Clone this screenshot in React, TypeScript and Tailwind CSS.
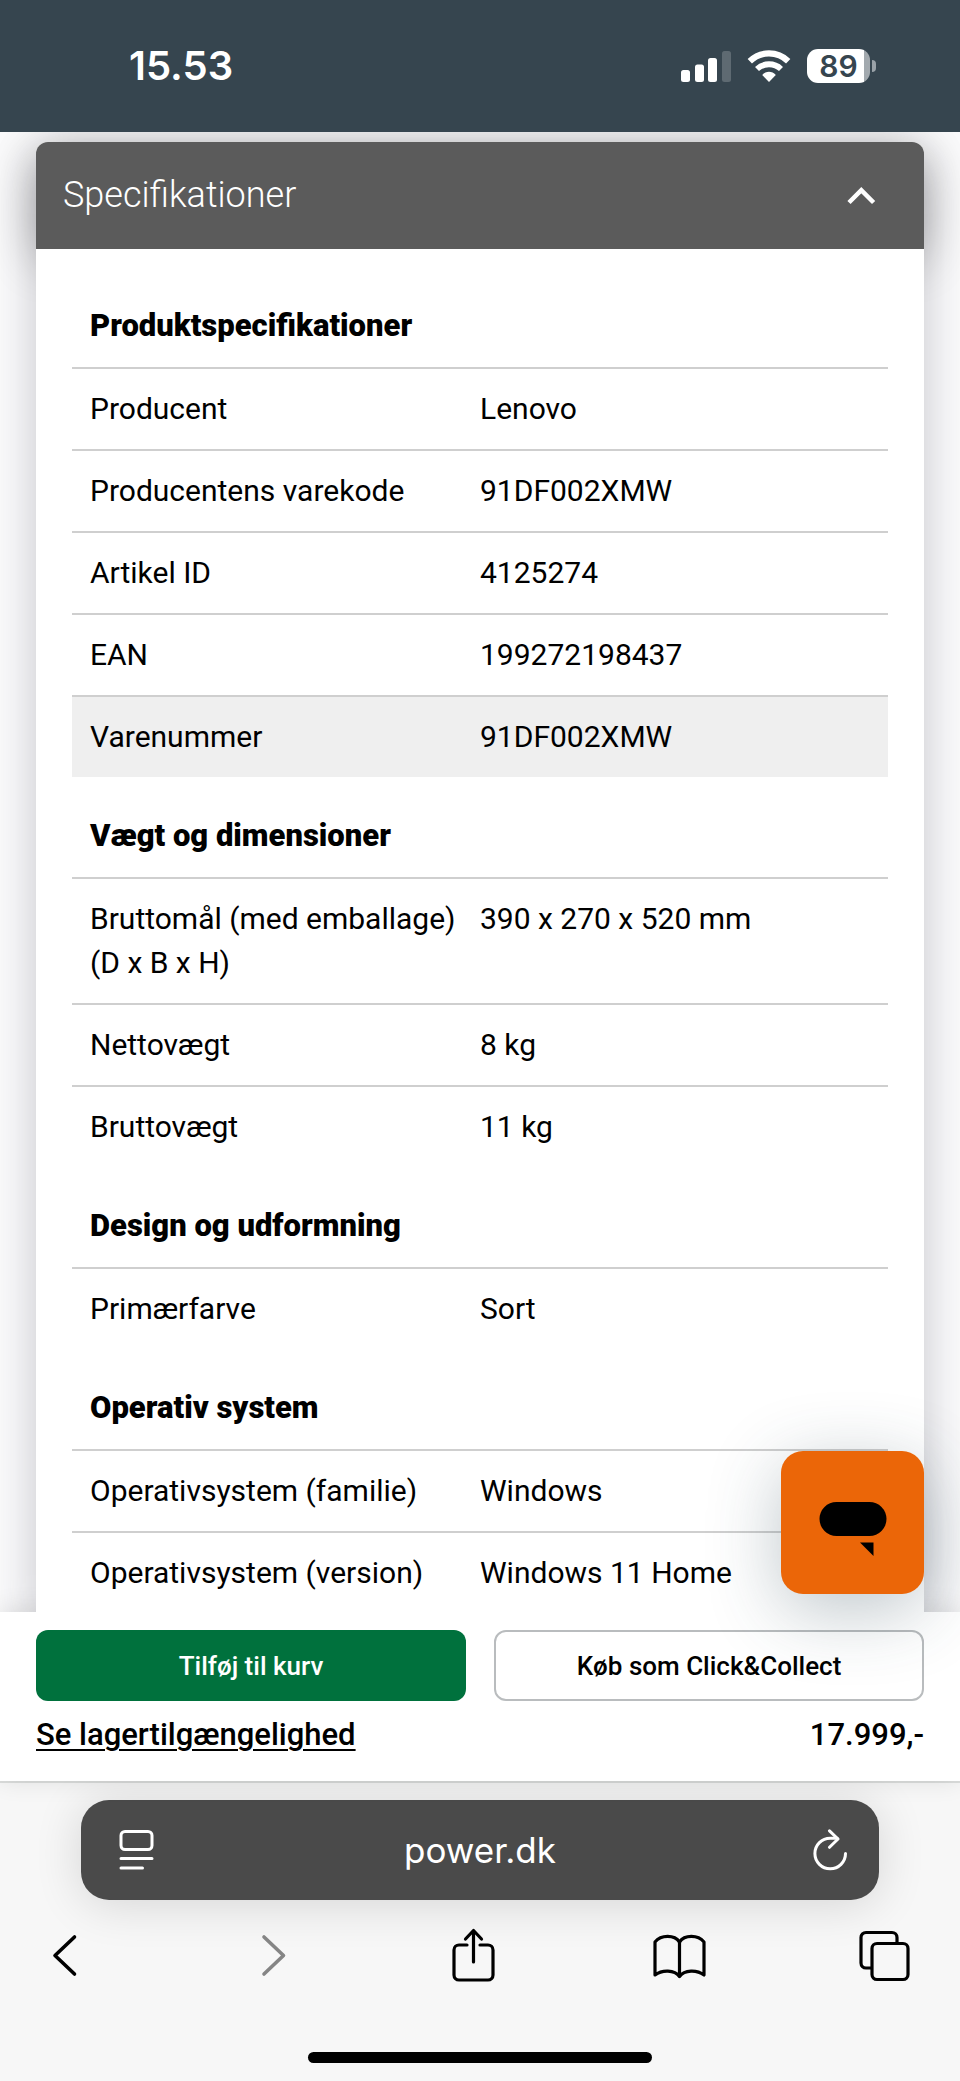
import React, { useState } from "react";

type Spec = { navn: string; vaerdi: string; markeret?: boolean };
type SpecGruppe = { titel: string; specs: Spec[] };

const grupper: SpecGruppe[] = [
  {
    titel: "Produktspecifikationer",
    specs: [
      { navn: "Producent", vaerdi: "Lenovo" },
      { navn: "Producentens varekode", vaerdi: "91DF002XMW" },
      { navn: "Artikel ID", vaerdi: "4125274" },
      { navn: "EAN", vaerdi: "199272198437" },
      { navn: "Varenummer", vaerdi: "91DF002XMW", markeret: true },
    ],
  },
  {
    titel: "Vægt og dimensioner",
    specs: [
      { navn: "Bruttomål (med emballage) (D x B x H)", vaerdi: "390 x 270 x 520 mm" },
      { navn: "Nettovægt", vaerdi: "8 kg" },
      { navn: "Bruttovægt", vaerdi: "11 kg" },
    ],
  },
  {
    titel: "Design og udformning",
    specs: [{ navn: "Primærfarve", vaerdi: "Sort" }],
  },
  {
    titel: "Operativ system",
    specs: [
      { navn: "Operativsystem (familie)", vaerdi: "Windows" },
      { navn: "Operativsystem (version)", vaerdi: "Windows 11 Home" },
    ],
  },
];

const StatusBar = () => (
  <header className="flex h-[132px] shrink-0 items-center justify-between bg-[#36454f] pr-[84px] pl-[129px] font-['Inter',sans-serif] text-white">
    <span className="text-[40px] leading-[40px] font-semibold">15.53</span>
    <div className="flex items-center gap-4">
      <svg width="50" height="34" viewBox="0 0 50 34" fill="currentColor" aria-label="Signal">
        <rect x="0" y="21" width="9" height="12" rx="2.5" />
        <rect x="14" y="15.5" width="9" height="17.5" rx="2.5" />
        <rect x="27" y="9" width="9" height="24" rx="2.5" />
        <rect x="41" y="2" width="9" height="31" rx="2.5" opacity="0.2" />
      </svg>
      <svg width="44" height="34" viewBox="0 0 44 34" fill="none" aria-label="Wi-Fi">
        <path d="M2.800 12.200a27.500 27.500 0 0 1 38.400 0" stroke="currentColor" strokeWidth="6.2" />
        <path d="M10 20a17.500 17.500 0 0 1 24 0" stroke="currentColor" strokeWidth="5.8" />
        <path d="M22 33l-6.800-7c3.800-4.200 9.800-4.200 13.600 0z" fill="currentColor" />
      </svg>
      <div className="flex items-center gap-0.5">
        <div className="flex h-[34px] w-[63px] items-center justify-center overflow-hidden rounded-[11px] bg-linear-to-r from-white from-90% to-[#a2a9ae] to-90%">
          <span className="text-[30px] leading-[34px] font-semibold text-[#36454f]">89</span>
        </div>
        <div className="h-3 w-1 rounded-r-full bg-[#9aa2a8]"></div>
      </div>
    </div>
  </header>
);

const SpecTabel = ({ gruppe }: { gruppe: SpecGruppe }) => (
  <table className="mb-[18px] w-full table-fixed border-collapse text-left text-[30px] leading-[44px]">
    <thead>
      <tr>
        <th colSpan={2} scope="colgroup" className="px-[18px] py-[19px] text-[31px] font-black">
          {gruppe.titel}
        </th>
      </tr>
    </thead>
    <tbody>
      {gruppe.specs.map((spec) => (
        <tr
          key={spec.navn}
          className={`border-t-2 border-[#cfcfcf] align-top ${spec.markeret ? "bg-[#efefef]" : ""}`}
        >
          <th scope="row" className="w-1/2 py-[18px] pl-[18px] font-normal">
            {spec.navn}
          </th>
          <td className="w-1/2 py-[18px] pr-[18px] font-normal">{spec.vaerdi}</td>
        </tr>
      ))}
    </tbody>
  </table>
);

const KoebsBar = () => (
  <section className="shrink-0 bg-white px-9 pt-[18px] pb-6 shadow-[0_-2px_24px_rgba(0,0,0,0.12)]">
    <div className="grid grid-cols-2 gap-7 text-[26px] leading-[30px] font-medium">
      <button className="h-[71px] rounded-xl bg-[#00713d] text-white">Tilføj til kurv</button>
      <button className="h-[71px] rounded-xl border-2 border-[#b9bcbe]">Køb som Click&amp;Collect</button>
    </div>
    <div className="flex items-center justify-between pt-3 text-[31px] leading-[44px] font-medium">
      <a href="#lager" className="underline decoration-2 underline-offset-4">
        Se lagertilgængelighed
      </a>
      <span>17.999,-</span>
    </div>
  </section>
);

const Browser = () => (
  <footer className="relative flex shrink-0 flex-col items-center border-t-2 border-[#dcdedd] bg-[#f7f7f7] pt-[17px] pb-[18px]">
    <div className="w-full px-[81px]">
      <div className="flex h-[100px] items-center justify-between rounded-[28px] bg-[#4a4a4a] px-8 text-white shadow-[0_4px_48px_rgba(0,0,0,0.14)]">
        <button aria-label="Sidemenu">
          <svg width="42" height="42" viewBox="-6 0 42 42" fill="none" stroke="currentColor" strokeWidth="3" strokeLinecap="round">
            <rect x="2" y="2.5" width="31" height="18" rx="4" />
            <path d="M2 29.5h31M2 39h21.500" />
          </svg>
        </button>
        <span className="font-['Inter',sans-serif] text-[35px] leading-[44px]">power.dk</span>
        <button aria-label="Genindlæs">
          <svg width="42" height="42" viewBox="-7 0 42 42" fill="none" stroke="currentColor" strokeWidth="3" strokeLinecap="round" strokeLinejoin="round">
            <path d="M33.500 24.500a15.300 15.300 0 1 1-15.300-15.300h7" />
            <path d="M17.5 1.800l8.500 8.200-8.500 8.300" />
          </svg>
        </button>
      </div>
    </div>
    <nav className="flex w-full items-center justify-between pt-[27px] pr-[50px] pl-[38px]">
      <button aria-label="Tilbage">
        <svg width="52" height="56" viewBox="0 0 52 56" fill="none" stroke="currentColor" strokeWidth="3.6" strokeLinecap="round" strokeLinejoin="round">
          <path d="M36.500 10L17 28.500l19.500 18.500" />
        </svg>
      </button>
      <button aria-label="Frem" className="text-[#858585]">
        <svg width="52" height="56" viewBox="0 0 52 56" fill="none" stroke="currentColor" strokeWidth="3.6" strokeLinecap="round" strokeLinejoin="round">
          <path d="M21 10l19.500 18.500L21 47" />
        </svg>
      </button>
      <button aria-label="Del">
        <svg width="52" height="56" viewBox="-4 0 52 56" fill="none" stroke="currentColor" strokeWidth="3.200" strokeLinecap="round" strokeLinejoin="round">
          <path d="M16 18H8a5 5 0 0 0-5 5v25a5 5 0 0 0 5 5h29a5 5 0 0 0 5-5V23a5 5 0 0 0-5-5h-8" />
          <path d="M22.500 35V4M14.500 12l8-8.500 8 8.500" />
        </svg>
      </button>
      <button aria-label="Bogmærker">
        <svg width="54" height="56" viewBox="0 0 54 56" fill="none" stroke="currentColor" strokeWidth="3.200" strokeLinecap="round" strokeLinejoin="round">
          <path d="M27.500 15c-5-7.500-18.500-7.500-24.500 0v33c7-5.500 19.500-5.500 24.500 1.500 5-7 17.500-7 24.500-1.500V15c-6-7.500-19.500-7.500-24.500 0z" />
          <path d="M27.500 15v34" />
        </svg>
      </button>
      <button aria-label="Faner">
        <svg width="52" height="56" viewBox="0 0 52 56" fill="none" stroke="currentColor" strokeWidth="3.200" strokeLinejoin="round">
          <path d="M13.500 41H8a5 5 0 0 1-5-5V10.500a5 5 0 0 1 5-5h26a5 5 0 0 1 5 5V16" />
          <rect x="14" y="16.500" width="36" height="36" rx="5" />
        </svg>
      </button>
    </nav>
    <div className="mt-[69px] h-[11px] w-[344px] rounded-full bg-black"></div>
  </footer>
);

const App = () => {
  const [aaben, setAaben] = useState(true);

  return (
    <div className="flex h-screen flex-col overflow-hidden bg-[#fbfbfc] font-['Roboto',sans-serif] text-black">
      <StatusBar />

      <div className="relative z-10 flex min-h-0 flex-1 flex-col">
        <main className="min-h-0 flex-1 overflow-hidden px-9 pt-2.5">
          <div className="rounded-t-xl bg-white shadow-[0_16px_48px_rgba(30,30,50,0.24)]">
            <button
              onClick={() => setAaben(!aaben)}
              aria-expanded={aaben}
              className="flex w-full items-center justify-between rounded-t-xl bg-[#5b5b5b] py-[31px] pr-12 pl-[27px] text-white shadow-[0_8px_48px_rgba(0,0,0,0.3)]"
            >
              <span className="text-[36px] leading-[45px] font-light">Specifikationer</span>
              <svg width="30" height="30" viewBox="0 0 30 30" fill="none" stroke="currentColor" strokeWidth="4.500">
                <path d="M3 21.500L15.300 9.200l12.300 12.300" />
              </svg>
            </button>
            {aaben && (
              <div className="relative bg-white px-9 pt-9">
                {grupper.map((gruppe) => (
                  <SpecTabel key={gruppe.titel} gruppe={gruppe} />
                ))}
              </div>
            )}
          </div>
        </main>

        {/* Chat */}
        <button
          aria-label="Åbn chat"
          className="absolute right-9 bottom-[187px] z-10 flex h-[143px] w-[143px] items-center justify-center rounded-[22px] bg-[#eb6608] pt-3 shadow-[0_16px_72px_rgba(40,66,80,0.3)]"
        >
          <svg width="68" height="54" viewBox="0 0 68 54" fill="currentColor">
            <rect x="0.500" y="0" width="67" height="34" rx="17" />
            <path d="M41 40.500h13.500V54z" />
          </svg>
        </button>

        <KoebsBar />
      </div>

      <Browser />
    </div>
  );
};

export default App;
